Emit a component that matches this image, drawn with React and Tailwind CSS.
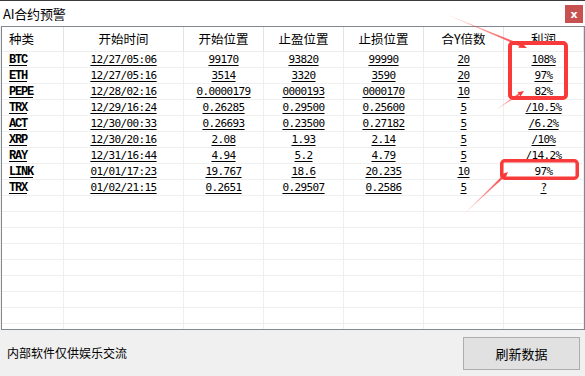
import React from "react";

const rows = [
  ["BTC", "12/27/05:06", "99170", "93820", "99990", "20", "108%"],
  ["ETH", "12/27/05:16", "3514", "3320", "3590", "20", "97%"],
  ["PEPE", "12/28/02:16", "0.0000179", "0000193", "0000170", "10", "82%"],
  ["TRX", "12/29/16:24", "0.26285", "0.29500", "0.25600", "5", "/10.5%"],
  ["ACT", "12/30/00:33", "0.26693", "0.23500", "0.27182", "5", "/6.2%"],
  ["XRP", "12/30/20:16", "2.08", "1.93", "2.14", "5", "/10%"],
  ["RAY", "12/31/16:44", "4.94", "5.2", "4.79", "5", "/14.2%"],
  ["LINK", "01/01/17:23", "19.767", "18.6", "20.235", "10", "97%"],
  ["TRX", "01/02/21:15", "0.2651", "0.29507", "0.2586", "5", "?"],
];

const headers = ["种类", "开始时间", "开始位置", "止盈位置", "止损位置", "合Y倍数", "利润"];

const cjk = { fontFamily: '"Noto Sans CJK SC", "Noto Sans", sans-serif' };
const mono = { fontFamily: '"DejaVu Sans Mono", "Liberation Mono", monospace' };
const serifMono = { fontFamily: '"Liberation Mono", "DejaVu Sans Mono", monospace' };

export default function App() {
  const empty = Array.from({ length: 9 });
  return (
    <div className="relative w-[585px] h-[376px] overflow-hidden bg-[#f0f0f0] text-black" style={cjk}>
      {/* title bar */}
      <div className="h-[26px] bg-white border-t border-[#3c3c3c] flex items-center justify-between pl-[3px] pr-[2px]">
        <span className="text-[13px] leading-none tracking-[-0.2px]">AI合约预警</span>
        <div className="w-[18px] h-[18px] bg-[#c75050] flex items-center justify-center text-white text-[11px] font-bold leading-none mt-[1px]" style={{ fontFamily: '"DejaVu Sans", sans-serif' }}>
          x
        </div>
      </div>

      {/* table panel */}
      <div className="ml-[1px] w-[584px] h-[304px] border border-[#828790] bg-white overflow-hidden">
        <div className="grid grid-cols-[62px_120px_80px_80px_80px_80px_80px]">
          {headers.map((h, i) => (
            <div
              key={h}
              className={`h-[25px] border-b border-r border-b-[#ececec] border-r-[#e3e3e3] flex items-center text-[12.5px] leading-none ${i === 0 ? "pl-[7px]" : "justify-center"}`}
            >
              {h}
            </div>
          ))}
          {rows.map((r, ri) =>
            r.map((c, ci) => (
              <div
                key={ri + "-" + ci}
                className={`h-[16px] border-b border-r border-[#efefef] flex items-center leading-none ${ci === 0 ? "pl-[7px] text-[12px] tracking-[-1.2px] font-bold" : "justify-center text-[11px] tracking-[-0.6px]"}`}
                style={ci === 0 ? serifMono : mono}
              >
                <span className="underline underline-offset-[2px]">{c}</span>
              </div>
            ))
          )}
          {empty.map((_, ri) =>
            headers.map((h, ci) => (
              <div key={"e" + ri + ci} className="h-[16px] border-b border-r border-[#efefef]" />
            ))
          )}
        </div>
      </div>

      {/* bottom bar */}
      <div className="h-[46px] flex items-center justify-between pl-[7px] pr-[5px]">
        <span className="text-[12px] leading-none">内部软件仅供娱乐交流</span>
        <button className="w-[117px] h-[33px] bg-[#e1e1e1] border border-[#adadad] text-[13px] leading-none flex items-center justify-center" style={cjk}>
          刷新数据
        </button>
      </div>

      {/* annotations */}
      <svg className="absolute inset-0 pointer-events-none" width="585" height="376" viewBox="0 0 585 376">
        <defs>
          <linearGradient id="g1" gradientUnits="userSpaceOnUse" x1="443" y1="13" x2="527" y2="48">
            <stop offset="0" stopColor="#f83a3a" stopOpacity="0.1" />
            <stop offset="1" stopColor="#f83a3a" stopOpacity="1" />
          </linearGradient>
          <linearGradient id="g2" gradientUnits="userSpaceOnUse" x1="494" y1="111" x2="524" y2="91">
            <stop offset="0" stopColor="#f83a3a" stopOpacity="0.1" />
            <stop offset="1" stopColor="#f83a3a" stopOpacity="1" />
          </linearGradient>
          <linearGradient id="g3" gradientUnits="userSpaceOnUse" x1="462" y1="216" x2="508" y2="172">
            <stop offset="0" stopColor="#f83a3a" stopOpacity="0.1" />
            <stop offset="1" stopColor="#f83a3a" stopOpacity="1" />
          </linearGradient>
        </defs>
        <rect x="510" y="43" width="56" height="55" rx="3" fill="none" stroke="#f83a3a" strokeWidth="4" />
        <rect x="501.75" y="160.75" width="75.5" height="17.5" rx="3" fill="none" stroke="#f83a3a" strokeWidth="3.5" />

        <polygon points="443,13 519.1,46 520.1,43.8" fill="url(#g1)" />
        <polygon points="527,48 518.4,47.7 520.8,42.1" fill="#f83a3a" />

        <polygon points="494,111 519.6,95.1 518.4,93.5" fill="url(#g2)" />
        <polygon points="524,91 520.4,96.4 517.6,92.2" fill="#f83a3a" />

        <polygon points="462,216 503.7,177.7 502.1,175.9" fill="url(#g3)" />
        <polygon points="508,172 505,179 500.8,174.6" fill="#f83a3a" />
      </svg>
    </div>
  );
}
